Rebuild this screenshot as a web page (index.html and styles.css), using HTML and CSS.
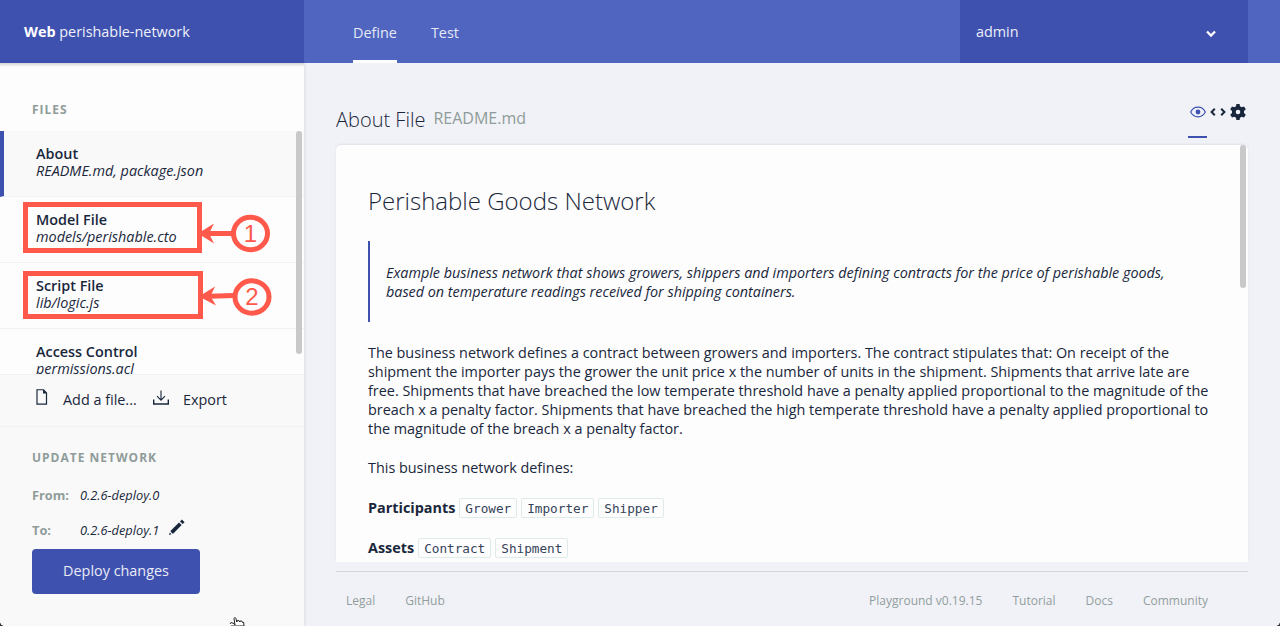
FILE: index.html
```html
<!DOCTYPE html>
<html lang="en">
<head>
<meta charset="utf-8">
<title>Web perishable-network</title>
<link rel="stylesheet" href="styles.css">
</head>
<body>
<div class="app">
  <header class="topbar">
    <div class="brand"><span><b>Web</b> perishable-network</span></div>
    <nav class="tabs"><a class="tab active">Define</a><a class="tab">Test</a></nav>
    <div class="user"><span>admin</span>
      <svg class="chevron" viewBox="0 0 10 8"><path d="M1 1.5 5 5.5 9 1.5" fill="none" stroke="#fff" stroke-width="2.3"/></svg>
    </div>
  </header>
  <div class="body">
    <aside class="sidebar">
      <h3 class="side-title">FILES</h3>
      <ul class="files">
        <li class="file selected"><b>About</b><i>README.md, package.json</i></li>
        <li class="file"><b>Model File</b><i>models/perishable.cto</i></li>
        <li class="file"><b>Script File</b><i>lib/logic.js</i></li>
        <li class="file"><b>Access Control</b><i>permissions.acl</i></li>
        <li class="thumb side-thumb"></li>
      </ul>
      <div class="actions">
        <svg class="ico-file" viewBox="0 0 12 16"><path d="M1 .75H7.5L10.5 4V15.2H1Z" fill="none" stroke="#19273c" stroke-width="1.2"/><path d="M7 .5V4.5H11Z" fill="#19273c"/></svg>
        <span class="add">Add a file...</span>
        <svg class="ico-export" viewBox="0 0 16 16"><path d="M8 .5V10M4 6.2 8 10.2 12 6.2" fill="none" stroke="#19273c" stroke-width="1.1"/><path d="M.7 9.5V14H15.3V9.5" fill="none" stroke="#19273c" stroke-width="1.4"/></svg>
        <span>Export</span>
      </div>
      <section class="update">
        <h3 class="update-title">UPDATE NETWORK</h3>
        <div class="version"><b>From:</b><i>0.2.6-deploy.0</i></div>
        <div class="version to"><b>To:</b><i>0.2.6-deploy.1</i>
          <svg class="ico-pencil" viewBox="0 0 16 16"><path d="M0 16 .8 13.5 2.5 15.2ZM1.7 11.7 10 3.4 12.7 6.1 4.4 14.4H3.4L1.7 12.7ZM11 2.4 12.9.5 15.6 3.2 13.7 5.1Z" fill="#19273c"/></svg>
        </div>
        <button class="deploy">Deploy changes</button>
      </section>
    </aside>
    <main class="main">
      <div class="file-head">
        <h1>About File</h1><span class="filename">README.md</span>
        <div class="tools">
          <span class="tool on"><svg class="ico-eye" viewBox="0 0 16 12"><path d="M.7 6C3.8-.4 12.2-.4 15.3 6 12.2 12.4 3.8 12.4.7 6Z" fill="none" stroke="#3f51af" stroke-width="1.2"/><circle cx="8" cy="6" r="2.4" fill="#3f51af"/></svg></span>
          <svg class="ico-code" viewBox="0 0 16 8"><path d="M4.8.8 1.6 4 4.8 7.2M11.2.8 14.4 4 11.2 7.2" fill="none" stroke="#19273c" stroke-width="2"/></svg>
          <svg class="ico-gear" viewBox="0 0 16 16"><path fill="#19273c" fill-rule="evenodd" d="M6.4 0H9.6L10 2.3 11.7 3.3 14 2.4 15.8 5.3 14 7V9L15.8 10.7 14 13.6 11.7 12.7 10 13.7 9.6 16H6.4L6 13.7 4.3 12.7 2 13.6.2 10.7 2 9V7L.2 5.3 2 2.4 4.3 3.3 6 2.3ZM8 5.7A2.3 2.3 0 1 0 8 10.3 2.3 2.3 0 1 0 8 5.7Z"/></svg>
        </div>
      </div>
      <article class="readme">
        <h2>Perishable Goods Network</h2>
        <blockquote>Example business network that shows growers, shippers and importers defining contracts for the price of perishable goods,<br>based on temperature readings received for shipping containers.</blockquote>
        <p>The business network defines a contract between growers and importers. The contract stipulates that: On receipt of the<br>shipment the importer pays the grower the unit price x the number of units in the shipment. Shipments that arrive late are<br>free. Shipments that have breached the low temperate threshold have a penalty applied proportional to the magnitude of the<br>breach x a penalty factor. Shipments that have breached the high temperate threshold have a penalty applied proportional to<br>the magnitude of the breach x a penalty factor.</p>
        <p>This business network defines:</p>
        <div class="defs"><b>Participants</b><code>Grower</code><code>Importer</code><code>Shipper</code></div>
        <div class="defs"><b>Assets</b><code>Contract</code><code>Shipment</code></div>
        <div class="thumb doc-thumb"></div>
      </article>
      <footer class="footer">
        <a>Legal</a><a>GitHub</a><span class="spacer"></span><a>Playground v0.19.15</a><a>Tutorial</a><a>Docs</a><a>Community</a>
      </footer>
    </main>
  </div>
  <svg class="notes" viewBox="0 0 280 330">
    <g fill="none" stroke="#ff594b" stroke-width="5">
      <rect x="25.5" y="204.5" width="174" height="46"/>
      <rect x="25.5" y="273.5" width="175" height="43"/>
      <ellipse cx="250.5" cy="233.5" rx="17" ry="16.2"/>
      <ellipse cx="252" cy="297" rx="17" ry="16.2"/>
      <path d="M208 233.5H232M210 296.3 234 295.5"/>
    </g>
    <path d="M198 233.5 214 223.5 209 233.5 214 243.5ZM199 296.5 215 286.5 210.5 296.3 216 305.5Z" fill="#ff594b"/>
    <text x="250.5" y="242.2" class="note-num">1</text>
    <text x="252" y="305.2" class="note-num">2</text>
  </svg>
  <svg class="cursor" viewBox="0 0 16 9"><path d="M1 7 2 5.5 5 6.5 6 8 5 1.5C5.2.3 6.6.3 6.9 1.5L7.8 5 8 3.8 10 3.5 10.7 5 11 4 13 4.2 13.5 5.5 14.7 5.3 15 9H2" fill="#fff" stroke="#222" stroke-width="1"/></svg>
  <i class="corner left"></i><i class="corner right"></i>
</div>
</body>
</html>
```
FILE: styles.css
```css
* { box-sizing: border-box; }
body { margin: 0; font: 14.4px/19px "Open Sans", sans-serif; color: #19273c; }
h1, h2, h3, p, ul, blockquote { margin: 0; padding: 0; font-weight: 400; }
svg { display: block; flex: none; }
.app { position: relative; width: 1280px; height: 626px; overflow: hidden; background: #f1f2f7; display: flex; flex-direction: column; }
.topbar { height: 63px; flex: none; display: flex; background: #4f65c0; color: #fff; }
.brand { width: 304px; padding: 22px 24px; background: #3f51af; color: #f0f1fa; }
.brand b { color: #fff; }
.tabs { flex: 1; display: flex; gap: 34px; padding-left: 49px; color: #e5e8f6; }
.tab { padding-top: 23px; height: 63px; }
.tab.active { border-bottom: 3px solid #fff; }
.user { width: 288px; margin-right: 32px; padding: 22px 32px 0 16px; background: #3f51af; display: flex; justify-content: space-between; color: #eceef8; }
.chevron { width: 10px; height: 8px; margin-top: 8px; }
.body { flex: 1; min-height: 0; display: flex; }
.sidebar { width: 304px; background: #fdfdfd; box-shadow: 1px 0 3px rgba(25,39,60,.1); display: flex; flex-direction: column; }
.side-title, .update-title { font-size: 12px; line-height: 16px; font-weight: 700; letter-spacing: 1px; color: #8f9c99; }
.side-title { padding: 39px 32px 13px; background: linear-gradient(#d2d4d8, #fdfdfd 4px); }
.files { position: relative; height: 243px; overflow: hidden; list-style: none; flex: none; }
.file { height: 66px; padding: 14px 36px 0; border-bottom: 1px solid #f1f2f4; line-height: 17px; }
.file b, .file i { display: block; white-space: nowrap; }
.file b { font-weight: 600; }
.selected { background: #f9f9f9; border-left: 4px solid #3f51af; padding-left: 32px; }
.thumb { position: absolute; top: 0; width: 6px; border-radius: 3px; background: #c9c9c9; }
.side-thumb { right: 2px; height: 223px; }
.actions { height: 53px; flex: none; padding: 15px 0 0 35px; background: #f9f9f9; border-top: 1px solid #f0f1f4; border-bottom: 1px solid #f0f1f4; display: flex; }
.ico-file { width: 12px; height: 16px; margin: -1px 15px 0 1px; }
.add { width: 90px; white-space: nowrap; }
.ico-export { width: 16px; height: 16px; margin-right: 14px; }
.update { flex: 1; background: #f9f9f9; padding: 23px 32px 0; }
.version { height: 18px; margin-top: 20px; display: flex; font-size: 12.8px; line-height: 18px; }
.version b { width: 48px; font-weight: 700; color: #8f9c99; }
.version.to { margin-top: 17px; }
.ico-pencil { width: 16px; height: 16px; margin: -2px 0 0 10px; }
.deploy { display: block; width: 168px; height: 45px; margin-top: 10px; padding: 0 0 2px; border: 0; border-radius: 4px; background: #3f51af; color: #e9ebf6; font: 14.4px/43px "Open Sans", sans-serif; }
.main { flex: 1; padding: 0 32px; display: flex; flex-direction: column; }
.file-head { height: 82px; flex: none; display: flex; padding-top: 43px; }
h1 { font-size: 20px; line-height: 27px; font-weight: 300; }
.filename { margin: -1px 0 0 8px; font-size: 16px; line-height: 26px; color: #8f9c99; }
.tools { margin-left: auto; display: flex; padding-right: 2px; }
.tool.on { width: 19px; height: 32px; border-bottom: 2px solid #3f51af; }
.ico-eye { width: 16px; height: 12px; margin: 0 auto; }
.ico-code { width: 16px; height: 8px; margin: 2px 4px 0 3px; }
.ico-gear { width: 16px; height: 16px; margin-top: -2px; }
.readme { position: relative; height: 417px; flex: none; padding: 39px 32px 0; overflow: hidden; background: #fdfdfd; border-radius: 5px 5px 0 0; white-space: nowrap; box-shadow: 0 -1px 2px rgba(25,39,60,.08); }
h2 { font-size: 24px; line-height: 33px; font-weight: 300; }
blockquote { height: 81px; margin: 24px 0 21px; padding: 22px 16px; border-left: 2px solid #3f51af; font-style: italic; font-size: 14.36px; }
.readme p { margin-bottom: 20px; }
.readme p + .defs { margin-top: 21px; }
.defs { display: flex; gap: 4px; height: 20px; margin-bottom: 20px; }
.defs b { font-weight: 700; line-height: 20px; }
code { height: 20px; padding: 0 5px; border: 1px solid #dfebe9; border-radius: 2px; font: 12.7px/20px "DejaVu Sans Mono", monospace; color: #35435a; }
.doc-thumb { right: 2px; height: 143px; }
.footer { margin-top: 9px; border-top: 1px solid #d3d7dc; display: flex; gap: 30px; padding: 20px 40px 0 10px; font-size: 12px; line-height: 17px; color: #929e9d; }
.spacer { flex: 1; }
.notes { position: absolute; left: 0; top: 0; width: 280px; height: 330px; }
.note-num { font: 24px "Liberation Sans", sans-serif; fill: #ff594b; text-anchor: middle; }
.cursor { position: absolute; left: 229px; top: 617px; width: 16px; height: 9px; }
.corner { position: absolute; bottom: 0; width: 4px; height: 4px; }
.corner.left { left: 0; background: radial-gradient(circle at 100% 0, transparent 3.5px, #333 4px); }
.corner.right { right: 0; background: radial-gradient(circle at 0 0, transparent 3.5px, #333 4px); }
```
